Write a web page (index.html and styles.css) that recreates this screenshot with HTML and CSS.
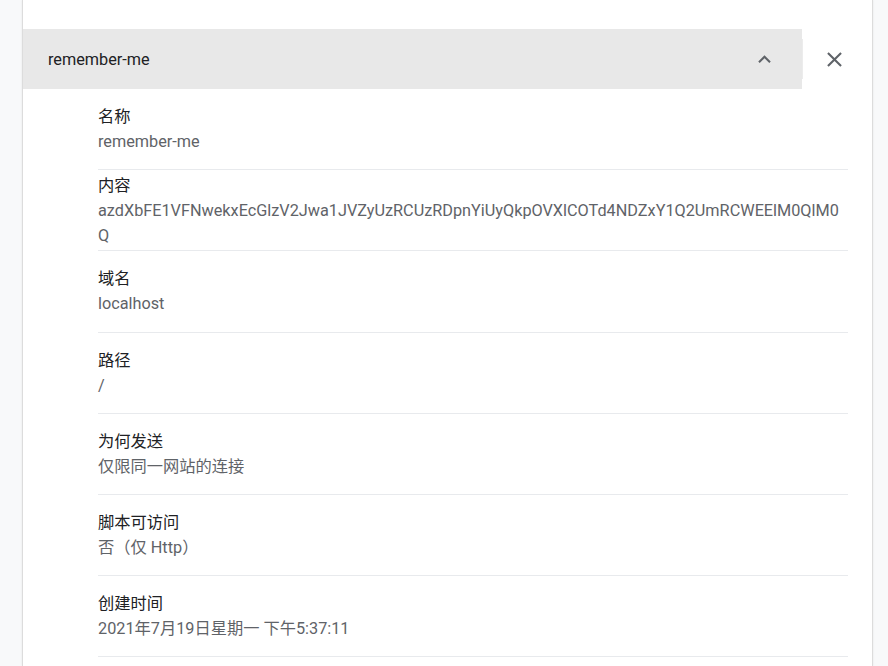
FILE: index.html
```html
<!DOCTYPE html>
<html lang="zh-CN">
<head>
<meta charset="utf-8">
<link rel="stylesheet" href="styles.css">
</head>
<body>
<div class="card">
  <div class="header">
    <div class="header-band">
      <span class="header-title">remember-me</span>
      <svg class="icon" viewBox="0 0 24 24" width="25" height="25"><path d="M12 8l-6 6 1.41 1.41L12 10.83l4.59 4.58L18 14z"/></svg>
    </div>
    <div class="sep"></div>
    <div class="close">
      <svg class="icon" viewBox="0 0 24 24" width="25" height="25"><path d="M19 6.41L17.59 5 12 10.59 6.41 5 5 6.41 10.59 12 5 17.59 6.41 19 12 13.41 17.59 19 19 17.59 13.41 12z"/></svg>
    </div>
  </div>
  <div class="rows">
    <div class="row">
      <div class="label">名称</div>
      <div class="value">remember-me</div>
    </div>
    <div class="row">
      <div class="label">内容</div>
      <div class="value wrap">azdXbFE1VFNwekxEcGlzV2Jwa1JVZyUzRCUzRDpnYiUyQkpOVXlCOTd4NDZxY1Q2UmRCWEElM0QlM0Q</div>
    </div>
    <div class="row">
      <div class="label">域名</div>
      <div class="value">localhost</div>
    </div>
    <div class="row">
      <div class="label">路径</div>
      <div class="value">/</div>
    </div>
    <div class="row">
      <div class="label">为何发送</div>
      <div class="value">仅限同一网站的连接</div>
    </div>
    <div class="row">
      <div class="label">脚本可访问</div>
      <div class="value">否（仅 Http）</div>
    </div>
    <div class="row">
      <div class="label">创建时间</div>
      <div class="value">2021年7月19日星期一 下午5:37:11</div>
    </div>
  </div>
</div>
</body>
</html>
```

FILE: styles.css
```css
html, body {
  margin: 0;
  padding: 0;
  background: #f8f9fa;
  height: 100%;
  overflow: hidden;
}

body {
  font-family: Roboto, "Noto Sans CJK SC", sans-serif;
  font-size: 16.25px;
  line-height: 25px;
  color: #202124;
}

.card {
  margin-left: 22px;
  width: 851px;
  box-sizing: border-box;
  min-height: 666px;
  background: #ffffff;
  border-left: 1px solid #dcdcdc;
  border-right: 1px solid #dcdcdc;
  box-shadow: 0 0 2px rgba(0, 0, 0, 0.08);
  padding-top: 29px;
}

.header {
  display: flex;
  align-items: center;
  height: 60px;
}

.header-band {
  width: 779px;
  height: 60px;
  box-sizing: border-box;
  background: #e8e8e8;
  display: flex;
  align-items: center;
  justify-content: space-between;
  padding-left: 25px;
  padding-right: 25px;
}

.header-title {
  color: #202124;
}

.icon {
  display: block;
  fill: #5f6368;
}

.sep {
  width: 1px;
  height: 40px;
  background: #ececec;
}

.close {
  padding-left: 19px;
  display: flex;
  align-items: center;
}

.rows {
  margin-left: 75px;
  width: 750px;
}

.row {
  min-height: 80.2px;
  display: flex;
  flex-direction: column;
  justify-content: center;
  border-top: 1px solid #e8eaed;
  box-sizing: content-box;
}

.row:first-child {
  border-top: none;
}

.row:last-child {
  border-bottom: 1px solid #e8eaed;
}

.label {
  color: #202124;
}

.value {
  color: #5f6368;
}

.wrap {
  word-break: break-all;
}
```
